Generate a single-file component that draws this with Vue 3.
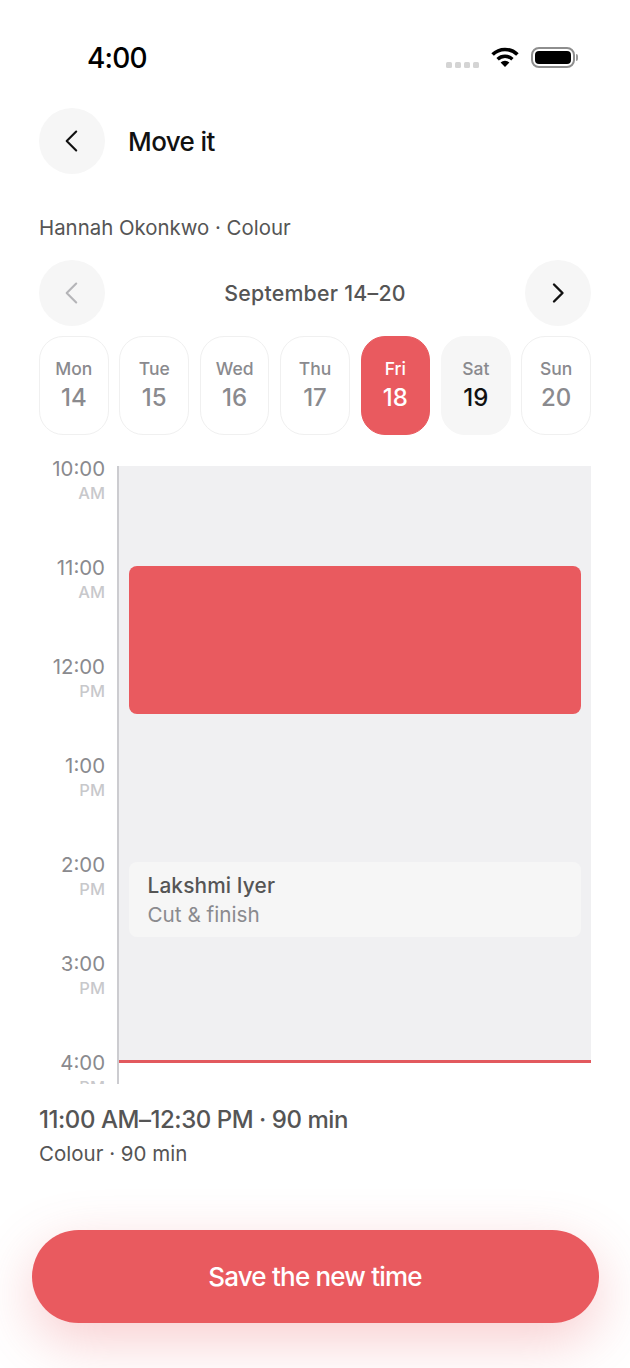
<template>
  <div class="screen">
    <!-- Status bar -->
    <div class="status-bar">
      <span class="clock">4:00</span>
      <div class="status-icons">
        <div class="signal">
          <span v-for="n in 4" :key="n" class="signal-dot"></span>
        </div>
        <svg class="wifi" width="28" height="20" viewBox="0 0 28 20" fill="none">
          <path d="M1.6 7.6A17.5 17.5 0 0 1 26.4 7.6" stroke="#000" stroke-width="3.6" />
          <path d="M6.6 12.2A10.6 10.6 0 0 1 21.4 12.2" stroke="#000" stroke-width="3.4" />
          <path d="M14 20L9.6 15.6A6.3 6.3 0 0 1 18.4 15.6Z" fill="#000" />
        </svg>
        <div class="battery">
          <div class="battery-body"><div class="battery-level"></div></div>
          <div class="battery-cap"></div>
        </div>
      </div>
    </div>

    <!-- Header -->
    <div class="header">
      <button class="round-btn">
        <svg width="24" height="24" viewBox="0 0 24 24" fill="none">
          <path d="M16.2 2.5L6.7 12L16.2 21.5" stroke="#111" stroke-width="2.1" stroke-linecap="round" stroke-linejoin="round" />
        </svg>
      </button>
      <h1>Move it</h1>
    </div>

    <p class="subtitle">Hannah Okonkwo · Colour</p>

    <!-- Week picker -->
    <div class="week-nav">
      <button class="round-btn">
        <svg width="24" height="24" viewBox="0 0 24 24" fill="none">
          <path d="M16.2 2.5L6.7 12L16.2 21.5" stroke="#b5b5b8" stroke-width="2.1" stroke-linecap="round" stroke-linejoin="round" />
        </svg>
      </button>
      <span class="week-label">September 14–20</span>
      <button class="round-btn">
        <svg width="24" height="24" viewBox="0 0 24 24" fill="none">
          <path d="M8 3.5L16.5 12L8 20.5" stroke="#111" stroke-width="2.4" stroke-linecap="round" stroke-linejoin="round" />
        </svg>
      </button>
    </div>

    <div class="days">
      <div v-for="day in days" :key="day.num" :class="['day', day.state]">
        <span class="day-name">{{ day.name }}</span>
        <span class="day-num">{{ day.num }}</span>
      </div>
    </div>

    <!-- Timeline -->
    <div class="timeline">
      <div class="hours">
        <div v-for="hour in hours" :key="hour.time" class="hour">
          <span class="hour-time">{{ hour.time }}</span>
          <span class="hour-period">{{ hour.period }}</span>
        </div>
      </div>
      <div class="rail">
        <div class="grid">
          <div class="event event-new"></div>
          <div class="event event-booked">
            <span class="event-name">Lakshmi Iyer</span>
            <span class="event-service">Cut &amp; finish</span>
          </div>
          <div class="now-line"></div>
        </div>
      </div>
    </div>

    <!-- Summary -->
    <div class="summary">
      <div class="summary-time">11:00 AM–12:30 PM · 90 min</div>
      <div class="summary-service">Colour · 90 min</div>
    </div>

    <div class="footer">
      <button class="save-btn">Save the new time</button>
    </div>
  </div>
</template>

<script setup>
const days = [
  { name: 'Mon', num: 14, state: '' },
  { name: 'Tue', num: 15, state: '' },
  { name: 'Wed', num: 16, state: '' },
  { name: 'Thu', num: 17, state: '' },
  { name: 'Fri', num: 18, state: 'selected' },
  { name: 'Sat', num: 19, state: 'muted' },
  { name: 'Sun', num: 20, state: '' }
]

const hours = [
  { time: '10:00', period: 'AM' },
  { time: '11:00', period: 'AM' },
  { time: '12:00', period: 'PM' },
  { time: '1:00', period: 'PM' },
  { time: '2:00', period: 'PM' },
  { time: '3:00', period: 'PM' },
  { time: '4:00', period: 'PM' }
]
</script>

<style>
html, body {
  margin: 0;
  background: #fff;
}
</style>

<style scoped>
.screen {
  width: 630px;
  height: 1368px;
  overflow: hidden;
  background: #fff;
  font-family: Inter, "Noto Sans", sans-serif;
  color: #111;
  box-sizing: border-box;
}

button {
  font-family: inherit;
  border: none;
  padding: 0;
}

/* Status bar */
.status-bar {
  height: 108px;
  box-sizing: border-box;
  padding: 41px 52px 0 87px;
  display: flex;
  justify-content: space-between;
  align-items: flex-start;
}

.clock {
  font-size: 28px;
  line-height: 34px;
  font-weight: 500;
  letter-spacing: -0.8px;
  color: #000;
}

.status-icons {
  display: flex;
  align-items: flex-start;
  padding-top: 6px;
}

.signal {
  display: flex;
  gap: 3px;
  margin-top: 15px;
  margin-right: 12px;
}

.signal-dot {
  width: 6px;
  height: 6px;
  border-radius: 1.5px;
  background: #d4d4d4;
}

.battery {
  display: flex;
  align-items: center;
  margin-left: 12px;
}

.battery-body {
  width: 44px;
  height: 21px;
  box-sizing: border-box;
  border: 2px solid #8e8e8e;
  border-radius: 8px;
  padding: 2px;
}

.battery-level {
  height: 100%;
  background: #000;
  border-radius: 4px;
}

.battery-cap {
  width: 2px;
  height: 7px;
  margin-left: 1px;
  background: #9a9a9a;
  border-radius: 0 2px 2px 0;
}

/* Header */
.header {
  display: flex;
  align-items: center;
  gap: 23px;
  padding: 0 39px;
}

.round-btn {
  width: 66px;
  height: 66px;
  border-radius: 50%;
  background: #f6f6f6;
  display: flex;
  align-items: center;
  justify-content: center;
  flex-shrink: 0;
}

h1 {
  margin: 0;
  font-size: 26px;
  font-weight: 500;
  letter-spacing: -0.6px;
  color: #111;
}

.subtitle {
  margin: 41px 39px 0;
  font-size: 20.4px;
  line-height: 26px;
  color: #555;
}

/* Week picker */
.week-nav {
  display: flex;
  align-items: center;
  justify-content: space-between;
  padding: 0 39px;
  margin-top: 19px;
}

.week-label {
  font-size: 21.3px;
  font-weight: 500;
  letter-spacing: 0.25px;
  color: #555;
}

.days {
  display: grid;
  grid-template-columns: repeat(7, 1fr);
  gap: 10.67px;
  padding: 0 39px;
  margin-top: 10px;
}

.day {
  height: 99px;
  box-sizing: border-box;
  border: 1.33px solid #f0f0f0;
  border-radius: 24px;
  display: flex;
  flex-direction: column;
  align-items: center;
  justify-content: center;
  gap: 3px;
  color: #8a8a8e;
}

.day-name {
  font-size: 17.5px;
  line-height: 22px;
  font-weight: 500;
}

.day-num {
  font-size: 24px;
  line-height: 30px;
  font-weight: 500;
}

.day.selected {
  background: #e95a5f;
  border-color: #e95a5f;
  color: #fff;
}

.day.muted {
  background: #f6f6f6;
  border-color: #f6f6f6;
}

.day.muted .day-num {
  color: #111;
}

/* Timeline */
.timeline {
  display: flex;
  height: 629px;
  overflow: hidden;
  margin: 20px 39px 0;
}

.hours {
  width: 78px;
  flex-shrink: 0;
  padding-top: 1px;
}

.hour {
  height: 99px;
  box-sizing: border-box;
  padding-right: 12px;
  display: flex;
  flex-direction: column;
  align-items: flex-end;
}

.hour-time {
  font-size: 20.4px;
  line-height: 25px;
  color: #8a8a8e;
}

.hour-period {
  font-size: 16.5px;
  line-height: 25px;
  font-weight: 500;
  color: #c8c8cb;
}

.rail {
  flex: 1;
  margin-top: 11px;
  border-left: 2px solid #ccccd0;
}

.grid {
  position: relative;
  height: 597px;
  background: #f0f0f2;
}

.event {
  position: absolute;
  left: 10px;
  right: 10.5px;
  border-radius: 8px;
  box-sizing: border-box;
}

.event-new {
  top: 100px;
  height: 148px;
  background: #e95a5f;
}

.event-booked {
  top: 396px;
  height: 75px;
  background: #f6f6f6;
  padding: 11px 18.5px;
  display: flex;
  flex-direction: column;
  gap: 4px;
}

.event-name {
  font-size: 20.8px;
  line-height: 25px;
  font-weight: 500;
  letter-spacing: 0.15px;
  color: #555;
}

.event-service {
  font-size: 20.7px;
  line-height: 25px;
  color: #8a8a8e;
}

.now-line {
  position: absolute;
  left: 0;
  right: 0;
  bottom: 0;
  height: 3px;
  background: #e2595e;
}

/* Summary */
.summary {
  padding: 0 39px;
  margin-top: 21px;
}

.summary-time {
  font-size: 24px;
  line-height: 30px;
  font-weight: 500;
  letter-spacing: -0.45px;
  color: #555;
}

.summary-service {
  margin-top: 6px;
  font-size: 20.5px;
  line-height: 26px;
  color: #555;
}

/* Save button */
.footer {
  padding: 0 31.5px;
  margin-top: 63px;
}

.save-btn {
  display: block;
  width: 100%;
  height: 93px;
  border-radius: 46.5px;
  background: #e95a5f;
  color: #fff;
  font-size: 26px;
  font-weight: 500;
  letter-spacing: -0.8px;
  box-shadow: 0 18px 56px rgba(233, 90, 95, 0.3);
}
</style>
